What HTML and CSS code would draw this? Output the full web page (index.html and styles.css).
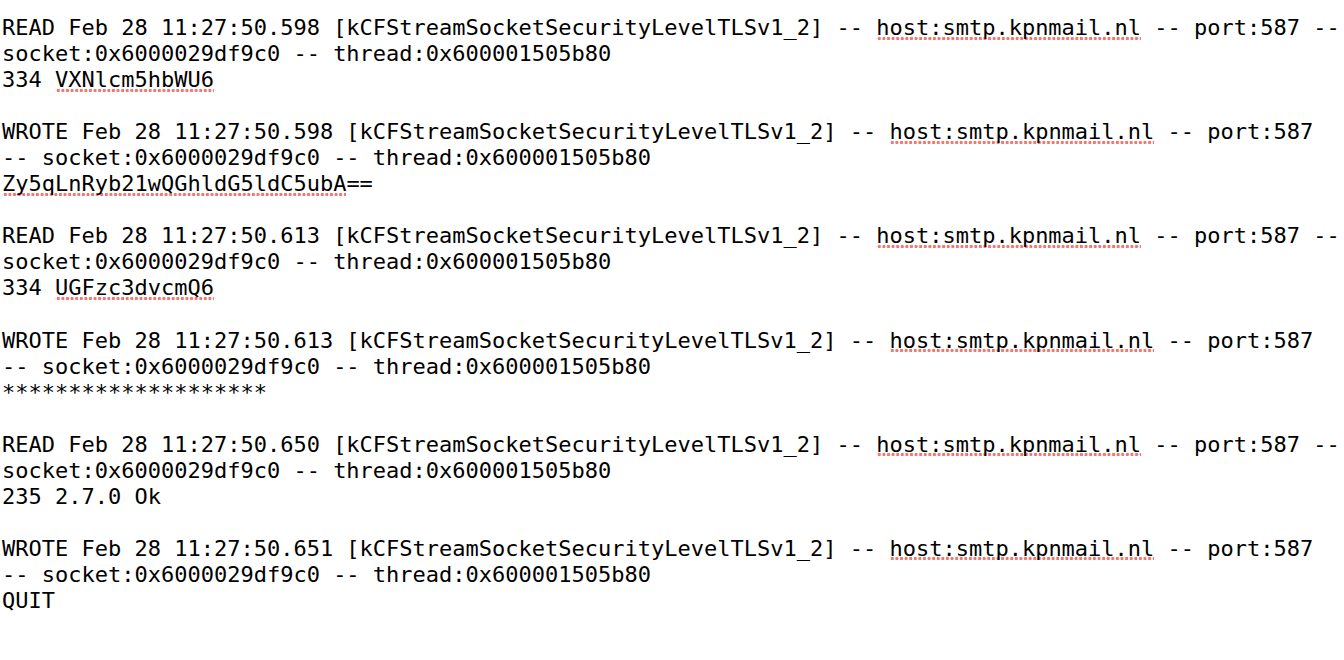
FILE: index.html
```html
<!DOCTYPE html>
<html>
<head>
<meta charset="utf-8">
<link rel="stylesheet" href="styles.css">
</head>
<body>
<pre class="log">READ Feb 28 11:27:50.598 [kCFStreamSocketSecurityLevelTLSv1_2] -- <span class="sp">host:smtp.kpnmail.nl</span> -- port:587 --
socket:0x6000029df9c0 -- thread:0x600001505b80
334 <span class="sp">VXNlcm5hbWU6</span>

WROTE Feb 28 11:27:50.598 [kCFStreamSocketSecurityLevelTLSv1_2] -- <span class="sp">host:smtp.kpnmail.nl</span> -- port:587
-- socket:0x6000029df9c0 -- thread:0x600001505b80
<span class="sp">Zy5qLnRyb21wQGhldG5ldC5ubA</span>==

READ Feb 28 11:27:50.613 [kCFStreamSocketSecurityLevelTLSv1_2] -- <span class="sp">host:smtp.kpnmail.nl</span> -- port:587 --
socket:0x6000029df9c0 -- thread:0x600001505b80
334 <span class="sp">UGFzc3dvcmQ6</span>

WROTE Feb 28 11:27:50.613 [kCFStreamSocketSecurityLevelTLSv1_2] -- <span class="sp">host:smtp.kpnmail.nl</span> -- port:587
-- socket:0x6000029df9c0 -- thread:0x600001505b80
********************

READ Feb 28 11:27:50.650 [kCFStreamSocketSecurityLevelTLSv1_2] -- <span class="sp">host:smtp.kpnmail.nl</span> -- port:587 --
socket:0x6000029df9c0 -- thread:0x600001505b80
235 2.7.0 Ok

WROTE Feb 28 11:27:50.651 [kCFStreamSocketSecurityLevelTLSv1_2] -- <span class="sp">host:smtp.kpnmail.nl</span> -- port:587
-- socket:0x6000029df9c0 -- thread:0x600001505b80
QUIT</pre>
</body>
</html>
```
FILE: styles.css
```css
html, body {
  margin: 0;
  padding: 0;
  background: #ffffff;
}

.log {
  margin: 15px 0 0 2px;
  font-family: "DejaVu Sans Mono", "Liberation Mono", monospace;
  font-size: 22px;
  line-height: 26.05px;
  color: #000000;
  white-space: pre;
}

.sp {
  background-image: radial-gradient(circle, rgba(236, 98, 90, 0.85) 0, rgba(236, 98, 90, 0.85) 1.5px, rgba(236, 98, 90, 0) 1.9px);
  background-size: 4.6px 5px;
  background-repeat: repeat-x;
  background-position: 1px calc(100% + 0.5px);
}
```
